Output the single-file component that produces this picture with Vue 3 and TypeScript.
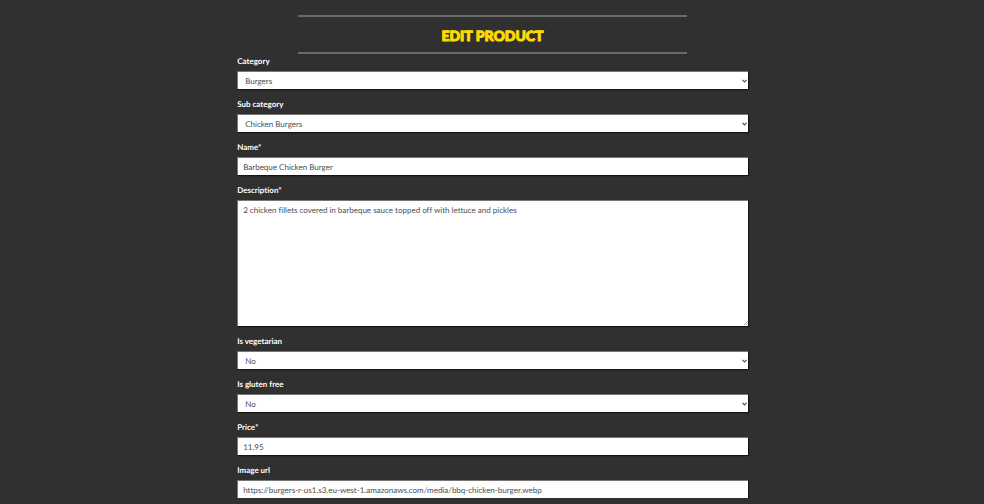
<script setup lang="ts">
import { reactive } from 'vue'

interface Field {
  id: string
  label: string
  kind: 'select' | 'text' | 'textarea'
  options?: string[]
}

const fields: Field[] = [
  { id: 'category', label: 'Category', kind: 'select', options: ['Burgers'] },
  { id: 'subCategory', label: 'Sub category', kind: 'select', options: ['Chicken Burgers'] },
  { id: 'name', label: 'Name*', kind: 'text' },
  { id: 'description', label: 'Description*', kind: 'textarea' },
  { id: 'vegetarian', label: 'Is vegetarian', kind: 'select', options: ['No', 'Yes'] },
  { id: 'glutenFree', label: 'Is gluten free', kind: 'select', options: ['No', 'Yes'] },
  { id: 'price', label: 'Price*', kind: 'text' },
  { id: 'imageUrl', label: 'Image url', kind: 'text' },
]

const product = reactive<Record<string, string>>({
  category: 'Burgers',
  subCategory: 'Chicken Burgers',
  name: 'Barbeque Chicken Burger',
  description: '2 chicken fillets covered in barbeque sauce topped off with lettuce and pickles',
  vegetarian: 'No',
  glutenFree: 'No',
  price: '11.95',
  imageUrl: 'https://burgers-r-us1.s3.eu-west-1.amazonaws.com/media/bbq-chicken-burger.webp',
})
</script>

<template>
  <main class="page">
    <header class="heading">
      <h1>EDIT PRODUCT</h1>
    </header>
    <form class="form" @submit.prevent>
      <div v-for="field in fields" :key="field.id" class="field">
        <label :for="field.id">{{ field.label }}</label>
        <div v-if="field.kind === 'select'" class="select">
          <select :id="field.id" v-model="product[field.id]" class="control">
            <option v-for="option in field.options" :key="option">{{ option }}</option>
          </select>
          <svg class="arrow" viewBox="0 0 5 4" aria-hidden="true">
            <path d="M0.5 0.8 2.5 2.8 4.5 0.8" fill="none" stroke="#495057" stroke-width="1.2" />
          </svg>
        </div>
        <div v-else-if="field.kind === 'textarea'" class="area">
          <textarea
            :id="field.id"
            v-model="product[field.id]"
            class="control"
            spellcheck="false"
          ></textarea>
          <svg class="grip" viewBox="0 0 4 4" aria-hidden="true">
            <path d="M0 4 4 0M2.2 4 4 2.2" fill="none" stroke="#777" stroke-width="0.6" />
          </svg>
        </div>
        <input v-else :id="field.id" v-model="product[field.id]" class="control" type="text" />
      </div>
    </form>
  </main>
</template>

<style>
body {
  background: #303030;
}
</style>

<style scoped>
.page {
  box-sizing: border-box;
  width: 52%;
  margin: 0 auto;
  padding: 15px 0 0 1px;
  font-family: Lato, sans-serif;
  font-variant-ligatures: none;
  text-rendering: geometricPrecision;
}

.heading {
  box-sizing: border-box;
  width: 76%;
  margin: 0 auto 1px;
  padding: 10px 0 7px;
  border-top: 2px solid #696969;
  border-bottom: 2px solid #696969;
}

h1 {
  margin: 0;
  color: #ffdc00;
  font-size: 14px;
  font-weight: 900;
  line-height: 18px;
  text-align: center;
  -webkit-text-stroke: 1px #ffdc00;
}

.form {
  display: flex;
  flex-direction: column;
  gap: 9px;
}

.field {
  display: flex;
  flex-direction: column;
  gap: 4px;
}

label {
  color: #fff;
  font-size: 8px;
  font-weight: 700;
  line-height: 12px;
}

.control {
  display: block;
  box-sizing: border-box;
  width: 100%;
  height: 18px;
  margin: 0;
  padding: 1px 5px 0;
  border: 1px solid #777;
  border-width: 1px 0 0 1px;
  border-radius: 0;
  outline: none;
  background: #fff;
  box-shadow: 1px 1px 1px #151515;
  color: #495057;
  font-family: inherit;
  font-size: 8px;
  font-variant-ligatures: none;
  line-height: 12px;
  text-rendering: geometricPrecision;
}

.select,
.area {
  position: relative;
}

select.control {
  padding: 1px 7px 0;
  appearance: none;
}

.arrow {
  position: absolute;
  top: 8px;
  right: 1px;
  width: 5px;
  height: 4px;
  pointer-events: none;
}

textarea.control {
  height: 126px;
  padding-top: 3px;
  resize: none;
}

.grip {
  position: absolute;
  right: 0;
  bottom: 1px;
  width: 4px;
  height: 4px;
  pointer-events: none;
}
</style>
